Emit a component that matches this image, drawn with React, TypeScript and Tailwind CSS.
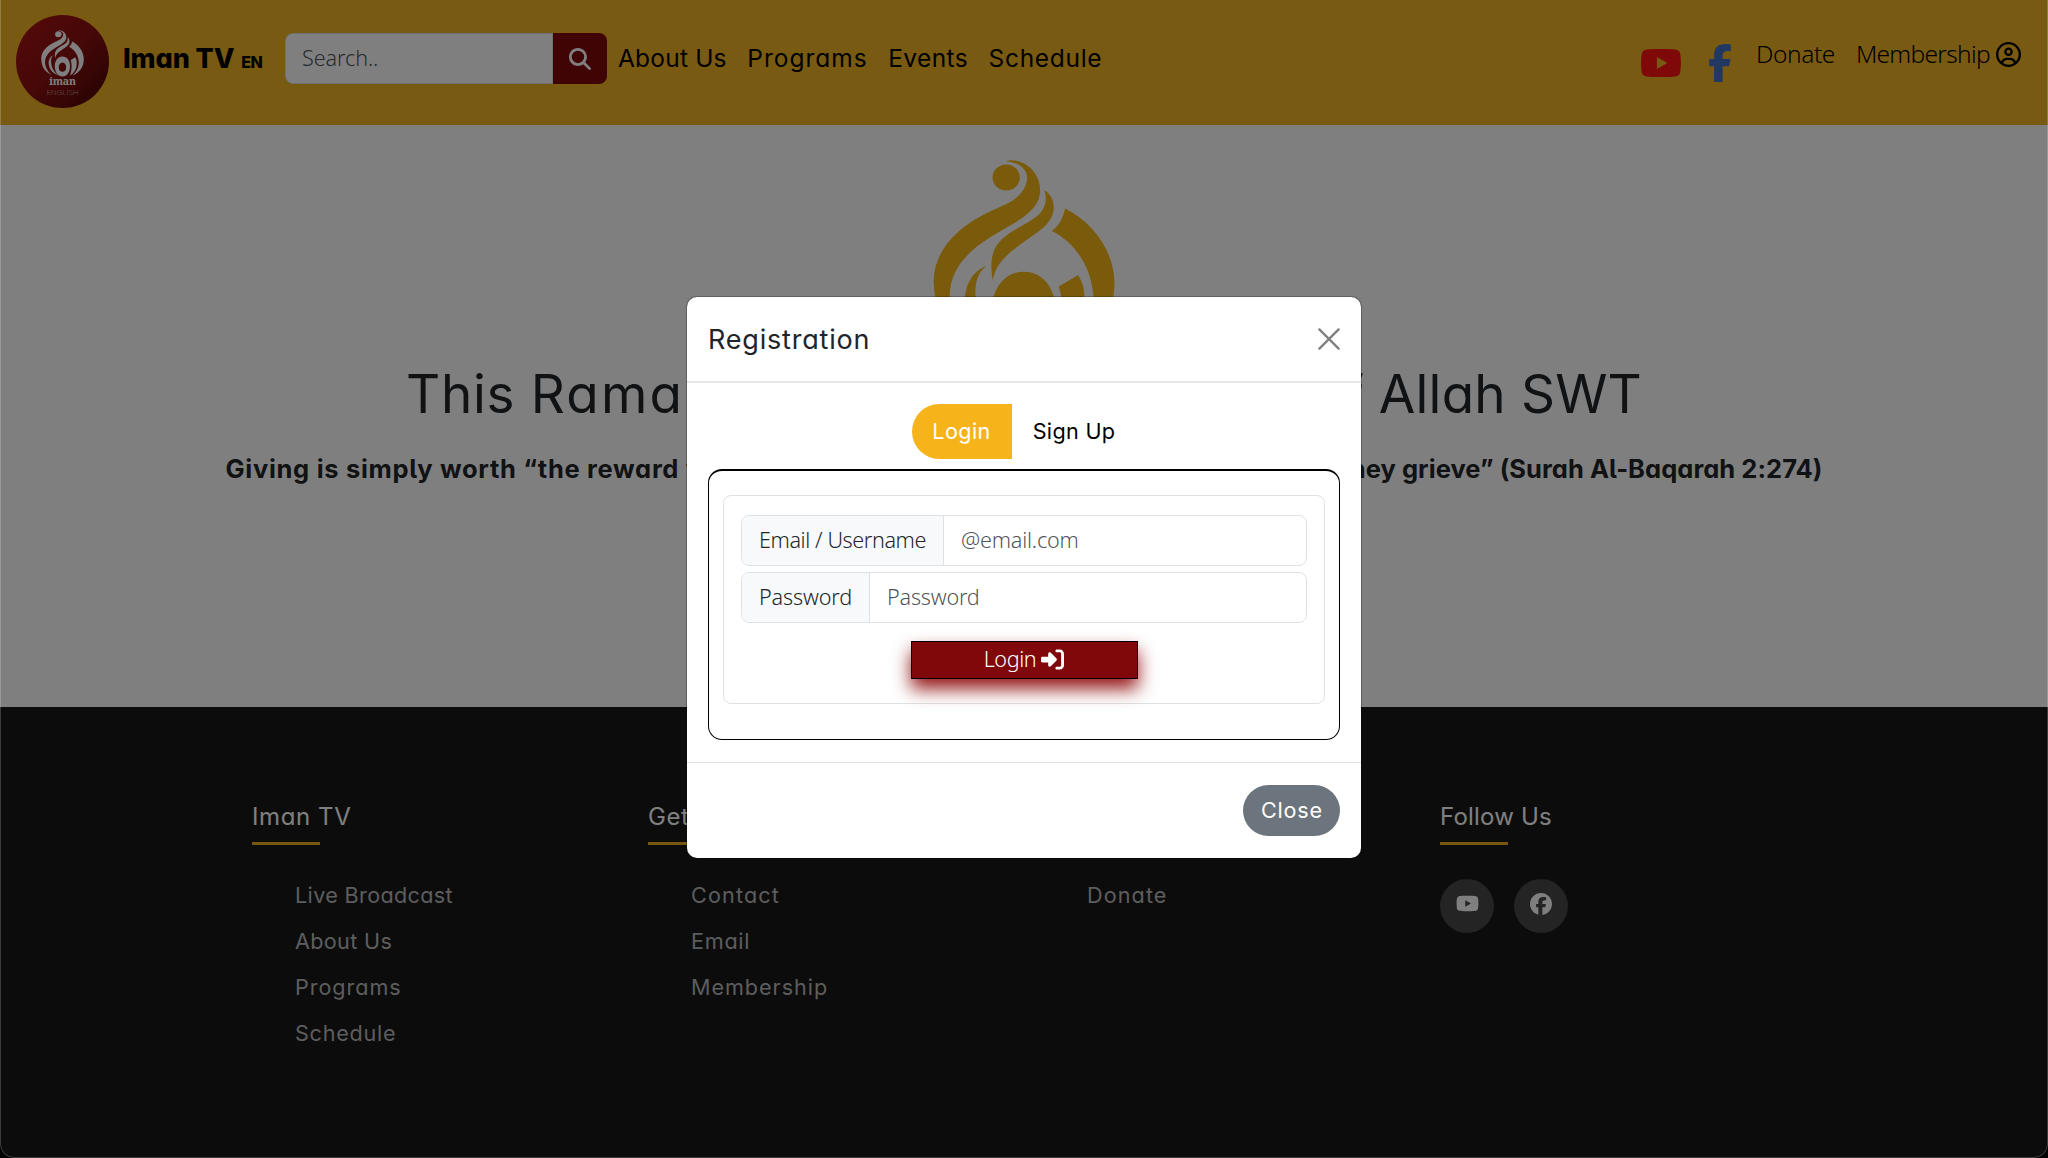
import { FaFacebook, FaFacebookF, FaMagnifyingGlass, FaRegCircleUser, FaRightToBracket, FaYoutube } from 'react-icons/fa6';

function Flame({ className }: { className: string }) {
  return (
    <svg viewBox="100 56 547 600" className={className} fill="currentColor" aria-hidden="true">
      <ellipse cx="320" cy="111" rx="41" ry="39" />
      <path d="M318 62C365 48 423 90 422 150C421 196 385 222 345 248C270 293 152 345 150 468C152 530 180 585 235 630C150 592 104 530 102 420C105 330 170 262 265 216C320 190 345 185 370 150C394 115 388 68 318 62Z" />
      <path d="M435 149C455 160 466 185 462 212C456 250 420 272 380 300C330 335 290 365 280 419C270 370 275 325 308 296C345 262 400 245 425 215C440 195 442 175 435 149Z" />
      <path d="M497 204C590 250 650 345 645 440C640 535 590 600 500 640C560 585 583 530 582 465C575 380 530 310 457 271C477 258 490 235 497 204Z" />
      <path d="M261 376C228 400 226 440 228 468C232 540 262 592 315 630C245 610 196 550 196 468C202 420 225 390 261 376Z" />
      <path
        fillRule="evenodd"
        d="M373 394C315 394 275 445 275 520C275 595 315 650 373 650C432 650 470 595 470 520C470 445 432 394 373 394ZM373 470C405 470 420 500 420 530C420 565 402 590 373 590C344 590 326 565 326 530C326 500 342 470 373 470Z"
      />
      <path d="M478 439L536 404C552 430 556 450 555 480C555 550 525 605 470 636C490 580 498 500 478 439Z" />
    </svg>
  );
}

function Header() {
  return (
    <header className="h-[125px] shrink-0 bg-[#f2b426]">
      <div className="flex h-[117px] items-center pl-4 pr-[27px]">
        <div className="mt-[5px] flex size-[93px] shrink-0 flex-col items-center rounded-full bg-gradient-to-br from-[#ac1414] via-[#8c1010] to-[#4a0606] pt-[15px] text-white">
          <Flame className="h-[47px] w-[43px]" />
          <span className="font-['Noto_Serif','DejaVu_Serif',serif] text-[10.5px] font-bold leading-[9px] tracking-tight">iman</span>
          <span className="mt-px font-['Open_Sans',sans-serif] text-[8px] font-light leading-[9px] opacity-60">ENGLISH</span>
        </div>
        <div className="ml-[14px] w-[159px] shrink-0 whitespace-nowrap pt-[3px] font-['Inter'] text-[27px] font-extrabold leading-10 tracking-[-0.1px] text-black [font-feature-settings:'cv11']">
          Iman TV <span className="ml-px text-[16px] tracking-[-0.5px]">EN</span>
        </div>
        <div className="ml-[3px] flex h-[51px] w-[322px] shrink-0 overflow-hidden rounded-lg">
          <div className="flex flex-1 items-center rounded-l-lg border border-[#dee2e6] bg-white pl-4 font-['Noto_Sans'] text-[21.6px] font-light tracking-[-0.1px] text-[#212529]/80">
            Search..
          </div>
          <button className="flex w-[54px] items-center justify-center bg-[#800909] text-[22px] text-white">
            <FaMagnifyingGlass />
          </button>
        </div>
        <nav className="-mt-px ml-[11px] flex gap-[20.5px] font-['Inter'] text-[24.5px] leading-10 text-black [font-feature-settings:'cv11']">
          <a className="tracking-[0.2px]">About Us</a>
          <a className="tracking-[1px]">Programs</a>
          <a className="tracking-[0.4px]">Events</a>
          <a className="tracking-[0.7px]">Schedule</a>
        </nav>
        <div className="ml-auto flex items-center font-['Noto_Sans'] text-[24.5px] font-light leading-10 text-black">
          <FaYoutube className="mt-[9px] h-[38px] w-[42px] text-[#ff1010]" />
          <FaFacebookF className="ml-[26px] mt-[9px] h-[38px] w-6 text-[#4372c4]" />
          <a className="-mt-[9px] ml-6 tracking-[-0.45px]">Donate</a>
          <a className="-mt-[9px] ml-[21px] flex items-center tracking-[-0.7px]">
            Membership
            <FaRegCircleUser className="ml-[6px] size-[25px]" />
          </a>
        </div>
      </div>
    </header>
  );
}

function Hero() {
  return (
    <main className="flex h-[582px] shrink-0 flex-col items-center bg-white pt-[34px] text-[#212529]">
      <Flame className="h-[200px] w-[182px] text-[#f5b416]" />
      <h1 className="flex w-[1236px] justify-between font-['Inter'] text-[53px] leading-[70px] [font-feature-settings:'cv11']">
        <span className="tracking-[0.7px]">
          This <span className="tracking-[2.2px]">Ramadan</span>
        </span>
        <span className="tracking-[0.2px]">of Allah SWT</span>
      </h1>
      <p className="mt-5 flex w-[1597px] justify-between whitespace-nowrap font-['Inter'] text-[25.5px] font-bold leading-10 [font-feature-settings:'cv11','cv05']">
        <span className="tracking-[0.7px]">Giving is simply worth “the reward with their Lord</span>
        <span className="tracking-[0.05px]">nor shall they grieve” (Surah Al-Baqarah 2:274)</span>
      </p>
    </main>
  );
}

function FooterHeading({ children, tracking }: { children: string; tracking: string }) {
  return (
    <h3 className={`${tracking} pt-px text-[24px] leading-[34px] text-white`}>
      {children}
      <span className="mt-[8px] block h-[3px] w-[68px] bg-[#f0b020]" />
    </h3>
  );
}

type Link = { label: string; tracking: string };

function FooterColumn({ title, links }: { title: string; links: Link[] }) {
  return (
    <div>
      <FooterHeading tracking="tracking-[0.6px]">{title}</FooterHeading>
      <ul className="mt-[27px] pl-[43px] text-[21.6px] leading-[46px] text-[#bbbbbb]">
        {links.map((link) => (
          <li key={link.label} className={link.tracking}>
            {link.label}
          </li>
        ))}
      </ul>
    </div>
  );
}

function Footer() {
  return (
    <footer className="grid flex-1 grid-cols-[396px_396px_396px_396px] items-start bg-[#181818] pl-[252px] pt-[92px] font-['Inter'] [font-feature-settings:'cv11']">
      <FooterColumn
        title="Iman TV"
        links={[
          { label: 'Live Broadcast', tracking: 'tracking-[0.35px]' },
          { label: 'About Us', tracking: 'tracking-[0.35px]' },
          { label: 'Programs', tracking: 'tracking-[0.95px]' },
          { label: 'Schedule', tracking: 'tracking-[0.75px]' },
        ]}
      />
      <FooterColumn
        title="Get Help"
        links={[
          { label: 'Contact', tracking: 'tracking-[1.15px]' },
          { label: 'Email', tracking: 'tracking-[0.75px]' },
          { label: 'Membership', tracking: 'tracking-[0.95px]' },
        ]}
      />
      <FooterColumn title="Support" links={[{ label: 'Donate', tracking: 'tracking-[1.1px]' }]} />
      <div>
        <FooterHeading tracking="tracking-[0.2px]">Follow Us</FooterHeading>
        <div className="mt-[34px] flex gap-5 text-white">
          <span className="flex size-[54px] items-center justify-center rounded-full bg-[#484848] pb-[5px] text-[23px]">
            <FaYoutube />
          </span>
          <span className="flex size-[54px] items-center justify-center rounded-full bg-[#484848] pb-[5px] text-[22px]">
            <FaFacebook />
          </span>
        </div>
      </div>
    </footer>
  );
}

function Field({ label, placeholder, width }: { label: string; placeholder: string; width: string }) {
  return (
    <div className="flex h-[51px] overflow-hidden rounded-lg border border-[#dee2e6] text-[21.6px]">
      <label className={`${width} flex shrink-0 items-center border-r border-[#dee2e6] bg-[#f8f9fa] pl-[17px] text-[#212529]`}>{label}</label>
      <div className="flex items-center pl-[17px] tracking-[-0.2px] text-[#212529]/80">{placeholder}</div>
    </div>
  );
}

function RegistrationModal() {
  return (
    <div className="absolute left-[687px] top-[297px] flex h-[561px] w-[674px] flex-col rounded-[10px] bg-white shadow-[0_0_0_1px_rgba(0,0,0,0.25)]">
      <div className="flex h-[86px] shrink-0 items-center justify-between border-b-2 border-[#e3e7ea] pl-[21px] pr-[21px]">
        <h2 className="pt-px font-['Inter'] text-[27px] leading-10 tracking-[0.8px] text-[#212529] [font-feature-settings:'cv11']">Registration</h2>
        <svg viewBox="0 0 16 16" className="size-[22px] text-[#7f7f7f]" fill="none" stroke="currentColor" strokeWidth="1.7" strokeLinecap="round" aria-label="Close">
          <path d="M1 1L15 15M15 1L1 15" />
        </svg>
      </div>
      <div className="flex h-[380px] shrink-0 flex-col border-b border-[#dee2e6] px-[21px] pt-[21px]">
        <div className="flex h-[55px] self-center font-['Inter'] text-[21.6px] leading-[55px] [font-feature-settings:'cv11']">
          <span className="w-[100px] rounded-l-full bg-[#f6b41a] text-center tracking-[0.4px] text-white">Login</span>
          <span className="w-[125px] text-center tracking-[0.3px] text-black">Sign Up</span>
        </div>
        <div className="mt-[10px] h-[271px] rounded-[14px] border-[1.5px] border-t-2 border-black px-[14px] pt-6">
          <div className="flex h-[209px] flex-col gap-[6px] rounded-lg border border-[#dee2e6] px-[17px] pt-[19px] font-['Noto_Sans'] font-light">
            <Field label="Email / Username" placeholder="@email.com" width="w-[202px] tracking-[-0.4px]" />
            <Field label="Password" placeholder="Password" width="w-[128px] tracking-[-0.15px]" />
            <button className="mt-3 flex h-[38px] w-[227px] items-center justify-center gap-[5px] self-center border-[1.5px] border-black bg-[#80070a] pb-px text-[21.6px] tracking-[-0.4px] text-white shadow-[0_10px_18px_rgba(139,0,0,0.9)]">
              Login <FaRightToBracket className="size-[23px]" />
            </button>
          </div>
        </div>
      </div>
      <div className="flex justify-end pr-[21px] pt-[22px]">
        <button className="h-[51px] w-[97px] rounded-full bg-[#6c757d] pl-px font-['Inter'] text-[21.6px] tracking-[0.8px] text-white [font-feature-settings:'cv11']">Close</button>
      </div>
    </div>
  );
}

export default function App() {
  return (
    <div className="relative h-[1158px] w-full overflow-hidden bg-black">
      <div className="flex h-full flex-col">
        <Header />
        <Hero />
        <Footer />
      </div>
      <div className="absolute inset-0 bg-black/50" />
      <div className="pointer-events-none absolute inset-x-0 -top-4 bottom-0 rounded-b-[14px] border border-white/20 shadow-[0_0_0_20px_black]" />
      <RegistrationModal />
    </div>
  );
}
